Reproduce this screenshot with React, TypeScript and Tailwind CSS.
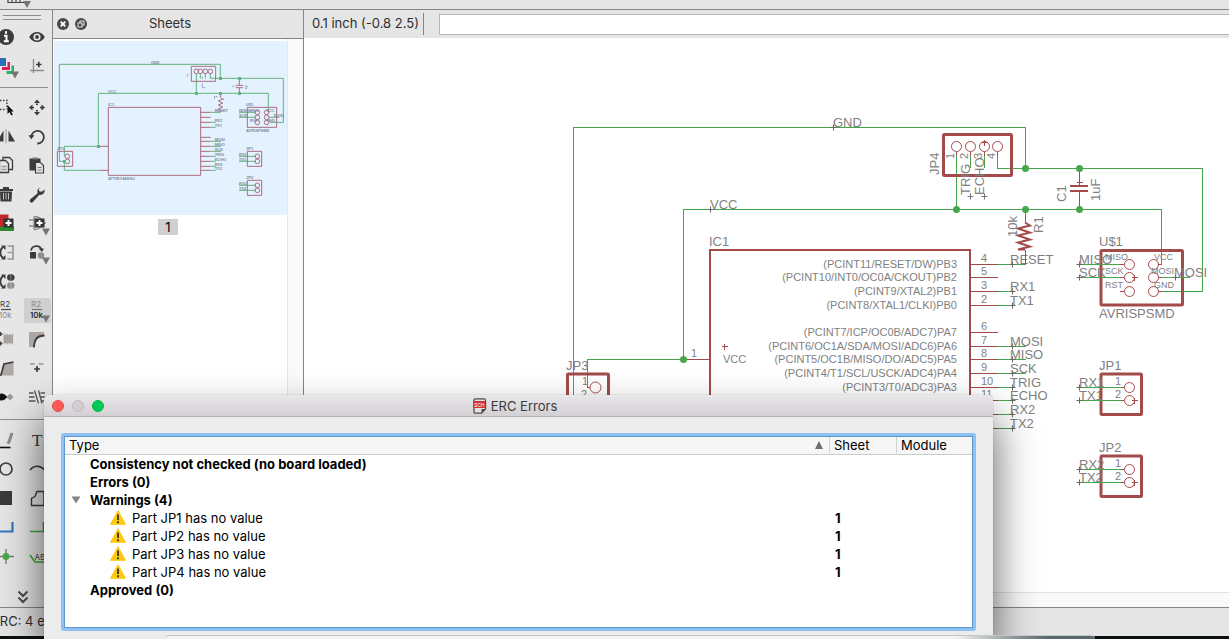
import type { ReactNode } from "react";

const GREEN = "#46a64b";
const RED = "#a34b4b";
const INK = "#3c3c3c";

/* ---------- tool palette ---------- */

type Tool = { name: string; art: ReactNode; more?: boolean; active?: boolean };

const plusBox = (x: number, y: number) => (
  <>
    <rect x={x} y={y} width="10" height="9" fill="#333" />
    <path d={`M${x + 5} ${y + 1.5}v6M${x + 2} ${y + 4.5}h6`} stroke="#fff" strokeWidth="2" />
  </>
);

const viewTools: Tool[] = [
  {
    name: "Info",
    art: (
      <>
        <circle cx="15" cy="14" r="8" fill={INK} />
        <path d="M15 8.2v2.6M13 12.7h2.5v5.2M12.8 18.3h5" stroke="#fff" strokeWidth="2" fill="none" />
      </>
    ),
  },
  {
    name: "Show",
    art: (
      <>
        <path d="M7.2 14C11 7.4 19 7.4 22.8 14 19 20.6 11 20.6 7.2 14Z" fill={INK} />
        <circle cx="15" cy="14" r="3.6" fill="#e6e6e6" />
        <circle cx="15" cy="14" r="1.9" fill={INK} />
      </>
    ),
  },
  {
    name: "Layer settings",
    more: true,
    art: (
      <>
        <path d="M20.500 13.500h2.500v8.500h-7.500v-3h5z" fill="#2fae62" />
        <path d="M16.500 10h2.500v8h-8v-3h5.500z" fill="#d81e58" />
        <rect x="7" y="6" width="8" height="8" fill="#2a70b8" />
      </>
    ),
  },
  {
    name: "Mark",
    art: (
      <>
        <path d="M8 18.500h14M11.500 7v14" stroke="#8a8a8a" strokeWidth="1.300" />
        <path d="M14 12.500h5.500M16.800 9.700v5.600" stroke={INK} strokeWidth="1.700" />
      </>
    ),
  },
];

const editTools: Tool[] = [
  {
    name: "Group",
    art: (
      <>
        <path d="M6 7.500h10v9M6 16.500h9" stroke={INK} strokeWidth="1.400" strokeDasharray="1.500 1.500" fill="none" />
        <path d="M16.500 12v9l2-2 1.700 3.500 1.600-.8-1.700-3.300h2.700z" fill="#111" />
      </>
    ),
  },
  {
    name: "Move",
    art: (
      <path d="M15 6.500l3 3.500h-6zM15 22.500l3-3.500h-6zM7 14.500l3.500-3v6zM23 14.500l-3.500-3v6zM14 10.500h2v1.500h-2zM14 17h2v1.500h-2zM10.500 13.700H12v1.600h-1.500zM18 13.700h1.500v1.600H18z" fill={INK} />
    ),
  },
  {
    name: "Mirror",
    art: (
      <>
        <path d="M12.500 8.500v11H6zM17.500 8.500v11H24z" fill={INK} />
        <path d="M15 7v14.500" stroke="#9a9a9a" strokeWidth="1" />
      </>
    ),
  },
  {
    name: "Rotate",
    art: (
      <>
        <path d="M9.300 14.500a6.300 6.300 0 1 1 6 7" stroke={INK} strokeWidth="1.800" fill="none" />
        <path d="M6.500 13.300h6l-3.300 4z" fill={INK} />
      </>
    ),
  },
  {
    name: "Copy",
    art: (
      <g fill="#e6e6e6" stroke={INK} strokeWidth="1.300">
        <path d="M12 6.500h6.500l3 3v9H12z" />
        <path d="M8.500 9.500h6l3 3v9h-9z" />
        <path d="M10.500 15.500h5M10.500 18.500h5" stroke="#999" />
      </g>
    ),
  },
  {
    name: "Paste",
    art: (
      <>
        <path d="M7.500 7.500h11v12h-11z" fill={INK} />
        <path d="M10.500 6.500h5v2h-5z" fill="#777" />
        <path d="M13.500 11.500h5l3 3v7.500h-8z" fill="#e6e6e6" stroke={INK} strokeWidth="1.200" />
        <path d="M15.500 16.500h4M15.500 19h4" stroke="#777" strokeWidth="1" />
      </>
    ),
  },
  {
    name: "Delete",
    art: (
      <>
        <path d="M8 9h14v2H8zM12 7h6v2h-6zM9 11.500h12l-.5 10H9.500z" fill={INK} />
        <path d="M12.500 13v6.500M15 13v6.500M17.500 13v6.500" stroke="#bdbdbd" strokeWidth="1" />
      </>
    ),
  },
  {
    name: "Change",
    art: (
      <path d="M18.800 7.200a4.600 4.600 0 0 0-3.200 6.100l-7.300 6a1.900 1.900 0 0 0 2.700 2.800l6.100-7.200a4.600 4.600 0 0 0 5.500-5.400l-2.900 2.300-2.500-.6-.5-2.300z" fill={INK} />
    ),
  },
  {
    name: "Add part",
    art: (
      <>
        <rect x="6" y="5.500" width="11.500" height="13" fill="#c1272d" />
        <rect x="6" y="17.500" width="17" height="4.500" fill="#2d8a2d" />
        {plusBox(12.5, 9.5)}
      </>
    ),
  },
  {
    name: "Add gate",
    more: true,
    art: (
      <>
        <path d="M12 7.500v13M12 7.500c5 0 8 2.500 9 6.500-1 4-4 6.500-9 6.500M7 11h5M7 17h5M21 14h3" stroke="#8a8a8a" strokeWidth="1.300" fill="none" />
        {plusBox(12.5, 9.5)}
      </>
    ),
  },
  {
    name: "Pin swap",
    art: (
      <>
        <path d="M12 9c-3.500 3-3.500 8 0 11" stroke={INK} strokeWidth="1.800" fill="none" />
        <path d="M10 7.500h4.500V12zM10 21.500h4.500V17z" fill={INK} />
        <path d="M22 7v15M16.500 8h5.500M16.500 14.500h5.500M16.500 21h5.500" stroke="#999" strokeWidth="1.700" />
      </>
    ),
  },
  {
    name: "Replace",
    more: true,
    art: (
      <>
        <path d="M9 12.500c1-5.500 9-6 10.500-.8" stroke={INK} strokeWidth="1.700" fill="none" />
        <path d="M16.500 10.500h5.500l-2 3.500z" fill={INK} />
        <rect x="8" y="14" width="6" height="6.500" fill={INK} />
        <circle cx="19" cy="17.500" r="3.300" fill="#8f8f8f" />
      </>
    ),
  },
  {
    name: "Gate swap",
    art: (
      <>
        <path d="M12 9c-3.500 3-3.500 8 0 11" stroke={INK} strokeWidth="1.800" fill="none" />
        <path d="M10 7.500h4.500V12zM10 21.500h4.500V17z" fill={INK} />
        <path d="M19.300 7.500a3 3 0 0 0 0 6zM20.300 7.500a3 3 0 0 1 0 6z" fill={INK} stroke={INK} strokeWidth=".7" />
        <path d="M19.300 15.500a3 3 0 0 0 0 6zM20.300 15.500a3 3 0 0 1 0 6z" fill="#8f8f8f" stroke="#8f8f8f" strokeWidth=".7" />
      </>
    ),
  },
  { name: "Spare slot", art: null },
  {
    name: "Name",
    art: (
      <g fontSize="8">
        <text x="9" y="11" fill="#444">R2</text>
        <path d="M10 13.500h10" stroke="#555" strokeWidth="1.300" />
        <text x="8" y="22" fill="#8c8c8c">10k</text>
      </g>
    ),
  },
  {
    name: "Value",
    more: true,
    active: true,
    art: (
      <g fontSize="8">
        <text x="9" y="11" fill="#8c8c8c">R2</text>
        <path d="M10 13.500h10" stroke="#777" strokeWidth="1.300" />
        <text x="8" y="22" fill="#111" fontWeight="500">10k</text>
      </g>
    ),
  },
  {
    name: "Smash",
    art: (
      <>
        <path d="M12.500 10h9.500v8h-9.500z" fill="#aaa3a0" />
        <path d="M14 8.800v10.400M16.500 8.800v10.400M19 8.800v10.400M21.500 8.800v10.400" stroke="#aaa3a0" strokeWidth="1.200" />
        <path d="M7.500 9h4M9.500 7v4M7.500 18.500h4M9.500 16.500v4" stroke={INK} strokeWidth="1.500" />
      </>
    ),
  },
  {
    name: "Miter",
    art: (
      <>
        <rect x="7" y="7" width="15" height="15" fill="#aea7a4" />
        <path d="M12 22c0-7 3-10.500 10-10.500V22z" fill="#e6e6e6" />
        <path d="M12 22.500c0-8 3-12 10.500-12" stroke={INK} strokeWidth="1.800" fill="none" />
      </>
    ),
  },
  {
    name: "Split",
    art: (
      <>
        <path d="M6 21.500h16.500V8L13 9.500l-3 11z" fill="#aea7a4" />
        <path d="M6 21h4l3-11 9.500-2" stroke={INK} strokeWidth="1.700" fill="none" />
      </>
    ),
  },
  {
    name: "Invoke",
    art: (
      <>
        <path d="M8 10h5M16.500 10h5" stroke="#999" strokeWidth="1.400" />
        <path d="M12 15h6M15 12v6" stroke={INK} strokeWidth="1.700" />
      </>
    ),
  },
  {
    name: "Optimize",
    art: (
      <>
        <circle cx="10.500" cy="14" r="3.500" fill="#111" />
        <path d="M13 11l3.500 3-3.500 3z" fill="#111" />
        <path d="M15.500 14l3.500-3.500 3.500 3.500-3.500 3.500z" fill="#999" />
      </>
    ),
  },
  {
    name: "Net split",
    art: (
      <path d="M7 10h4.500M7 14h5.500M7 18h6.500M12.500 7.500l4 13M18.500 10H23M18.500 14H23M18.500 18H23M16.500 7.500l3.500 13" stroke="#555" strokeWidth="1.300" />
    ),
  },
];

const drawTools: Tool[] = [
  {
    name: "Line",
    art: (
      <>
        <path d="M6 21.500h13.500" stroke="#111" strokeWidth="1.600" />
        <path d="M21 7l-3 9-1.500 1.500" stroke="#8d8d8d" strokeWidth="3" fill="none" />
      </>
    ),
  },
  {
    name: "Text",
    art: <text x="10" y="20" fontSize="17" fill="#333" className="font-['Liberation_Serif',serif]">T</text>,
  },
  { name: "Circle", art: <circle cx="15" cy="14" r="6" fill="none" stroke={INK} strokeWidth="1.700" /> },
  { name: "Arc", art: <path d="M8 15c4-5 10-5 15 0" fill="none" stroke={INK} strokeWidth="1.700" /> },
  { name: "Rectangle", art: <rect x="7" y="7" width="14" height="14" fill="#3a3a3a" /> },
  { name: "Polygon", art: <path d="M9.500 21.500v-7l3.500-2 2-5h7v14z" fill="none" stroke={INK} strokeWidth="1.400" /> },
  { name: "Bus", art: <path d="M6 18.500h15.500V9" fill="none" stroke="#2f77bf" strokeWidth="2.200" /> },
  { name: "Net", art: <path d="M8 18.500h13.500V9" fill="none" stroke="#3fa63f" strokeWidth="1.600" /> },
  {
    name: "Junction",
    art: (
      <>
        <path d="M8 14.500h15M15 7v15" stroke="#777" strokeWidth="1.300" />
        <circle cx="15" cy="14.500" r="3.400" fill="#44ac44" />
      </>
    ),
  },
  {
    name: "Label",
    art: (
      <>
        <path d="M8 13l5 7h12" fill="none" stroke="#3fa63f" strokeWidth="1.600" />
        <text x="12.500" y="18" fontSize="8" fill="#444">ABC</text>
      </>
    ),
  },
];

function ToolGrid({ tools }: { tools: Tool[] }) {
  return (
    <div className="-ml-[9px] grid w-[62px] grid-cols-2">
      {tools.map((t) =>
        t.art === null ? (
          <span key={t.name} className="h-[29px]" />
        ) : (
          <button
            key={t.name}
            type="button"
            aria-label={t.name}
            className={`h-[29px] ${t.active ? "rounded bg-[#cfcfcf] bg-clip-content p-0.5" : ""}`}
          >
            <svg viewBox="0 0 31 29" className={t.active ? "-m-0.5 h-[29px] w-[31px]" : "h-[29px] w-[31px]"} aria-hidden="true">
              {t.art}
              {t.more && <path d="M20 19.500h8l-4 7z" fill="#757575" />}
            </svg>
          </button>
        ),
      )}
    </div>
  );
}

/* ---------- schematic ---------- */

function Net({ d }: { d: string }) {
  return <path d={d} fill="none" stroke={GREEN} strokeWidth="1" shapeRendering="crispEdges" />;
}
function Part({ d, w = 1 }: { d: string; w?: number }) {
  return <path d={d} fill="none" stroke={RED} strokeWidth={w} shapeRendering="crispEdges" />;
}
function Box({ x, y, w, h }: { x: number; y: number; w: number; h: number }) {
  return <rect x={x} y={y} width={w} height={h} rx="1" fill="none" stroke={RED} strokeWidth="3" />;
}
function Label({ x, y, children, size = 13, up, end }: { x: number; y: number; children: string; size?: number; up?: boolean; end?: boolean }) {
  return (
    <text x={x} y={y} fontSize={size} textAnchor={end ? "end" : "start"} transform={up ? `rotate(-90 ${x} ${y})` : undefined}>
      {children}
    </text>
  );
}
const cross = (x: number, y: number, r = 3) => `M${x - r} ${y}h${2 * r}M${x} ${y - r}v${2 * r}`;

const pins: { y: number; n: string; fn: string; net?: string; to?: number }[] = [
  { y: 264, n: "4", fn: "(PCINT11/RESET/DW)PB3", net: "RESET", to: 1026 },
  { y: 277, n: "5", fn: "(PCINT10/INT0/OC0A/CKOUT)PB2" },
  { y: 291, n: "3", fn: "(PCINT9/XTAL2)PB1", net: "RX1", to: 1013 },
  { y: 305, n: "2", fn: "(PCINT8/XTAL1/CLKI)PB0", net: "TX1", to: 1013 },
  { y: 332, n: "6", fn: "(PCINT7/ICP/OC0B/ADC7)PA7" },
  { y: 346, n: "7", fn: "(PCINT6/OC1A/SDA/MOSI/ADC6)PA6", net: "MOSI", to: 1026 },
  { y: 359, n: "8", fn: "(PCINT5/OC1B/MISO/DO/ADC5)PA5", net: "MISO", to: 1026 },
  { y: 373, n: "9", fn: "(PCINT4/T1/SCL/USCK/ADC4)PA4", net: "SCK", to: 1026 },
  { y: 387, n: "10", fn: "(PCINT3/T0/ADC3)PA3", net: "TRIG", to: 1013 },
  { y: 400, n: "11", fn: "", net: "ECHO", to: 1013 },
  { y: 414, n: "", fn: "", net: "RX2", to: 1013 },
  { y: 428, n: "", fn: "", net: "TX2", to: 1013 },
];

function TwoPinHeader({ name, y, nets }: { name: string; y: number; nets: [string, string] }) {
  return (
    <g>
      <Box x={1101} y={y} w={40.5} h={40.5} />
      <Net d={`M1079 ${y + 13.5}H1121M1079 ${y + 26.5}H1121`} />
      <Part d={`M1121 ${y + 13.5}h3M1121 ${y + 26.5}h3${cross(1134.5, y + 26.5)}`} />
      <circle cx="1129.5" cy={y + 13.5} r="5" fill="none" stroke={RED} />
      <circle cx="1129.5" cy={y + 26.5} r="5" fill="none" stroke={RED} />
      <path d={cross(1079.5, y + 13.5) + cross(1079.5, y + 26.5)} stroke="#666" />
      <Label x={1099} y={y - 4}>{name}</Label>
      <Label x={1079} y={y + 13}>{nets[0]}</Label>
      <Label x={1079} y={y + 26}>{nets[1]}</Label>
      <Label x={1115} y={y + 11} size={11}>1</Label>
      <Label x={1115} y={y + 24} size={11}>2</Label>
    </g>
  );
}

function Schematic() {
  return (
    <svg
      viewBox="304 38 925 554"
      className="h-[554px] w-[925px] max-w-none font-['Liberation_Sans',sans-serif]"
      fill="#7f7f7f"
      role="img"
      aria-label="Schematic"
    >
      <Net d="M573.5 400V127.5H1025.5V168.5M683.5 359.500V209.500H1161.500V264.500H1158M587.500 387V359.500H683M997.500 156V168.500H1202.500V291.500H1161M956.500 156V209M970.500 156V168M984.500 156V168M1025.500 264V252" />
      <Part d="M710 400V250H970V400" w={2} />
      <Part d={`M684 359.500H710M587 387.500h3${cross(724.5, 346.5)}`} />
      <Box x={567.5} y={374} w={41} h={40} />
      <circle cx="595.500" cy="387.500" r="5.500" fill="none" stroke={RED} />
      <Label x={566} y={370}>JP3</Label>
      <Label x={582} y={385} size={11}>1</Label>
      <Label x={581} y={398} size={11}>2</Label>
      <path d={cross(833.5, 127.5) + cross(710.5, 209.5)} stroke="#666" />
      <Label x={833} y={127}>GND</Label>
      <Label x={710} y={209}>VCC</Label>
      <Label x={709} y={246}>IC1</Label>
      <Label x={691} y={357} size={11}>1</Label>
      <Label x={723} y={363} size={11}>VCC</Label>

      {pins.map((p) => (
        <g key={p.y}>
          {p.to && <Net d={`M998 ${p.y + 0.5}H${p.to}`} />}
          <Part d={`M970 ${p.y + 0.5}H998`} />
          {p.net && <path d={cross(1012.5, p.y + 0.5)} stroke="#666" />}
          <Label x={981} y={p.y - 2} size={11}>{p.n}</Label>
          <Label x={957} y={p.y + 4} size={11} end>{p.fn}</Label>
          {p.net && <Label x={1010} y={p.y}>{p.net}</Label>}
        </g>
      ))}

      {/* JP4 */}
      <Box x={943.5} y={134.5} w={68} h={41} />
      {[956.5, 970.5, 984.5, 997.5].map((x, i) => (
        <g key={x}>
          <circle cx={x} cy="146.500" r="5" fill="none" stroke={RED} />
          <Part d={`M${x} 151.500V156`} />
          <Label x={x - 2.5} y={159} size={11} up>{String(i + 1)}</Label>
        </g>
      ))}
      <Part d={cross(984.5, 142.5)} />
      <path d={cross(970.5, 196.5) + cross(984.5, 196.5)} stroke="#777" />
      <Label x={939} y={175} up>JP4</Label>
      <Label x={970} y={195} up>TRIG</Label>
      <Label x={984} y={195} up>ECHO</Label>

      {/* C1 */}
      <Part d="M1079.500 168V186M1079.500 191V209M1077 182.500h6" />
      <Part d="M1070 186h18M1070 191h18" w={2} />
      <Label x={1066} y={202} up>C1</Label>
      <Label x={1100} y={201} up>1uF</Label>

      {/* R1 */}
      <Part d="M1025.500 209V222M1025.500 250V264" />
      <path d="M1025 222.500l5 3-12 3 12 4-12 3 12 4-12 3 12 4-12 3h7" fill="none" stroke={RED} strokeWidth="2" />
      <Label x={1017} y={237} up>10k</Label>
      <Label x={1043} y={233} up>R1</Label>

      {[[683.5, 359.5], [956.5, 209.5], [1025.5, 209.5], [1079.5, 209.5], [1025.5, 168.5], [1079.5, 168.5]].map(([x, y]) => (
        <circle key={`${x}-${y}`} cx={x} cy={y} r="3.500" fill={GREEN} />
      ))}

      {/* U$1 */}
      <Box x={1101} y={250.5} w={81.5} h={54.5} />
      <Net d="M1079 264.500H1121M1079 277.500H1121M1162 277.500H1190" />
      <Part d={`M1120 264.500h4M1120 277.500h4M1120 291.500h4M1158 264.500h3M1158 277.500h4M1158 291.500h4${cross(1134.5, 277.5)}`} />
      {[264.5, 277.5, 291.5].map((y) => (
        <g key={y} fill="none" stroke={RED}>
          <circle cx="1129.500" cy={y} r="5" />
          <circle cx="1153.500" cy={y} r="5" />
        </g>
      ))}
      <path d={cross(1079.5, 264.5) + cross(1079.5, 277.5) + cross(1175.5, 277.5)} stroke="#666" />
      <Label x={1099} y={246}>U$1</Label>
      <Label x={1099} y={318}>AVRISPSMD</Label>
      <Label x={1079} y={264}>MISO</Label>
      <Label x={1079} y={277}>SCK</Label>
      <Label x={1174} y={277}>MOSI</Label>
      <Label x={1105} y={260} size={9}>MISO</Label>
      <Label x={1105} y={274} size={9}>SCK</Label>
      <Label x={1105} y={288} size={9}>RST</Label>
      <Label x={1154} y={260} size={9}>VCC</Label>
      <Label x={1151} y={274} size={9}>MOSI</Label>
      <Label x={1154} y={288} size={9}>GND</Label>

      <TwoPinHeader name="JP1" y={374} nets={["RX1", "TX1"]} />
      <TwoPinHeader name="JP2" y={456} nets={["RX2", "TX2"]} />
    </svg>
  );
}

/* Sheet preview, drawn at three units to the pixel. */
const previewLabels: [number, number, string][] = [
  [302, 72, "GND"], [174, 159, "VCC"], [174, 197, "IC1"], [20, 329, "JP3"], [174, 419, "ATTINY44SSU"],
  [588, 197, "U$1"], [588, 275, "AVRISPSMD"], [588, 329, "JP1"], [588, 416, "JP2"],
  [494, 216, "RESET"], [494, 246, "RX1"], [494, 261, "TX1"], [494, 303, "MOSI"], [494, 318, "MISO"],
  [494, 333, "SCK"], [494, 348, "TRIG"], [494, 363, "ECHO"], [494, 378, "RX2"], [494, 390, "TX2"],
  [567, 216, "MISO"], [567, 231, "SCK"], [671, 231, "MOSI"], [596, 215, "MISO"], [600, 246, "RST"], [648, 215, "VCC"], [648, 246, "GND"],
  [567, 348, "RX1"], [567, 363, "TX1"], [567, 435, "RX2"], [567, 450, "TX2"],
];

function SheetPreview() {
  return (
    <svg viewBox="12 3 699 522" className="h-[174px] w-[233px] bg-[#e4f1fe]" fill="none" strokeWidth="3" aria-hidden="true">
      <path
        stroke="#63b27d"
        d="M43 364H28V73H511V115M145 319V160H655V217M481 100V115H700V247H660M439 100V160M451 100v16M466 100v16M43 349V319H145M43 364V391H145M482 217h29M482 247h15M482 262h15M482 304h31M482 319h31M482 334h31M482 349h15M482 364h15M482 379h15M482 391h15M567 217h50M567 232h50M656 232h32M567 349h50M567 364h50M567 436h50M567 451h50"
      />
      <path
        stroke="#ab6c7c"
        d="M175 202H452V406H175ZM22 334H68V379H22ZM424 79H497V124H424ZM592 202H680V262H592ZM592 334H635V379H592ZM592 421H635V466H592ZM145 319h30M145 391h30M452 217h30M452 232h30M452 247h30M452 262h30M452 292h30M452 304h30M452 319h30M452 334h30M452 349h30M452 364h30M452 379h30M452 391h30M568 115v21M557 136h22M557 143h22M568 143v17M511 160v12l7 5-13 6 13 6-13 6 13 6-13 6 6 3v7"
      />
      <path stroke="#8393a5" strokeDasharray="4 2" d="M412 103v8M457 110v8M457 131v12h9M547 139h7M583 138h8v7h-6M492 170h10M492 174h4M521 176v6" />
      <g stroke="#ab6c7c">
        {[439, 451, 466, 481].map((x) => <circle key={x} cx={x} cy="94" r="7" />)}
        {[349, 364].map((y) => <circle key={y} cx="52" cy={y} r="7" />)}
        {[217, 232, 247, 349, 364, 436, 451].map((y) => <circle key={y} cx="622" cy={y} r="7" />)}
        {[217, 232, 247].map((y) => <circle key={y} cx="650" cy={y} r="7" />)}
      </g>
      <path fill="#63b27d" d="M507 111h9v9h-9zM564 111h9v9h-9zM435 156h9v9h-9zM507 156h9v9h-9zM564 156h9v9h-9zM141 315h9v9h-9zM39 360h9v9h-9z" />
      <g fill="#7b8b9d" fontSize="12" fontWeight="700" className="font-['Liberation_Sans',sans-serif]">
        {previewLabels.map(([x, y, t]) => <text key={`${x}-${y}`} x={x} y={y}>{t}</text>)}
      </g>
    </svg>
  );
}

/* ---------- ERC dialog ---------- */

function WarningIcon() {
  return (
    <svg viewBox="0 0 16 15" className="h-[15px] w-4 shrink-0" aria-hidden="true">
      <path d="M8 .8L15.500 14.300H.5Z" fill="#fdc910" stroke="#fdc910" strokeWidth="1" strokeLinejoin="round" />
      <path d="M8 4.500v5.500M8 11.300v1.900" stroke="#403c20" strokeWidth="1.900" />
    </svg>
  );
}

const heading = "pl-[25px] font-bold";
const warnings = ["JP1", "JP2", "JP3", "JP4"];

function ErcDialog() {
  return (
    <section
      aria-label="ERC Errors"
      className="absolute top-[395px] right-[236px] bottom-0 left-[44px] flex flex-col rounded-t-[5px] bg-[#ececec] shadow-[0_24px_44px_rgba(0,0,0,0.65),0_0_1px_rgba(0,0,0,0.5)]"
    >
      <header className="flex h-[22px] shrink-0 items-center rounded-t-[5px] border-b border-[#b4b2b4] bg-linear-to-b from-[#e9e7e9] to-[#d3d0d3] pr-4 pl-2">
        <div className="flex flex-1 gap-2">
          <button type="button" aria-label="Close" className="size-3 rounded-full border border-[#e24b48] bg-[#fc5b57]" />
          <button type="button" aria-label="Minimize" className="size-3 rounded-full border border-[#bdbbbd] bg-[#d0ced0]" />
          <button type="button" aria-label="Zoom" className="size-3 rounded-full border border-[#0cb44a] bg-[#05c955]" />
        </div>
        <h2 className="flex items-center gap-1 text-[13px] leading-4 text-[#3b3a3b]">
          <svg viewBox="0 0 15 16" className="h-4 w-[15px]" aria-hidden="true">
            <path d="M3.500.8h8.500q1.500 0 1.500 1.500v8.700l-4 4.200h-6Q2 15.200 2 13.700V2.300Q2 .8 3.500.8Z" fill="#e4e2e4" stroke="#504a4c" strokeWidth="1.300" />
            <path d="M13.500 11h-4v4z" fill="#504a4c" />
            <rect x="1" y="3" width="12" height="7" fill="#cf3438" />
            <text x="2" y="9" fontSize="5" fill="#fff">SCH</text>
          </svg>
          ERC Errors
        </h2>
        <div className="flex-1" />
      </header>
      <div className="mx-[17px] mt-4 mb-2 flex-1 rounded-[3px] bg-[#8fc1f0] p-[3px]">
        <div className="h-full border border-[#5e97cc] bg-white">
          <table className="w-full table-fixed border-collapse text-left text-[13px] leading-[18px] text-black">
            <thead>
              <tr className="h-[17px] border-b border-[#cbcbcb] bg-[#f6f6f6] leading-4">
                <th className="pl-1 font-normal">
                  <span className="flex items-center justify-between pr-1.5">
                    Type
                    <svg viewBox="0 0 8 8" className="size-2" aria-hidden="true"><path d="M4 0l4 8H0z" fill="#6f6f6f" /></svg>
                  </span>
                </th>
                <th className="w-[67px] font-normal"><span className="block border-l border-[#d2d2d2] pl-1">Sheet</span></th>
                <th className="w-[76px] font-normal"><span className="block border-l border-[#d2d2d2] pl-1">Module</span></th>
              </tr>
            </thead>
            <tbody>
              <tr><td className={heading}>Consistency not checked (no board loaded)</td><td /><td /></tr>
              <tr><td className={heading}>Errors (0)</td><td /><td /></tr>
              <tr>
                <td className="font-bold">
                  <button type="button" aria-expanded="true" className="flex items-center gap-[9px] pl-1.5">
                    <svg viewBox="0 0 10 8" className="h-2 w-2.5" aria-hidden="true"><path d="M.5.5h9L5 7.500z" fill="#868686" /></svg>
                    Warnings (4)
                  </button>
                </td>
                <td /><td />
              </tr>
              {warnings.map((part) => (
                <tr key={part}>
                  <td><span className="flex h-[18px] items-center gap-1.5 pl-[45px]"><WarningIcon />Part {part} has no value</span></td>
                  <td className="pl-1.5 font-bold">1</td>
                  <td />
                </tr>
              ))}
              <tr><td className={heading}>Approved (0)</td><td /><td /></tr>
            </tbody>
          </table>
        </div>
      </div>
    </section>
  );
}

/* ---------- window ---------- */

export default function App() {
  return (
    <div className="relative flex h-screen flex-col overflow-hidden bg-[#0a1012] font-[Inter,sans-serif] text-[13px] text-[#2f2f2f]">
      <div className="h-[10px] shrink-0 border-b border-[#868686] bg-[#e5e5e5]">
        <svg viewBox="0 0 40 9" className="h-[9px] w-10" aria-hidden="true">
          <path d="M8 0v2.500h16M12 0v2.500M16 0v2.500M20 0v2.500" stroke="#444" strokeWidth="1.200" fill="none" />
          <path d="M23 1h8l-4 7z" fill="#757575" />
        </svg>
      </div>

      <div className="flex min-h-0 flex-1">
        <nav aria-label="Tools" className="flex w-[53px] shrink-0 flex-col overflow-hidden border-r border-[#868686] bg-[#e6e6e6]">
          <div className="mt-[5px] mb-[3px] ml-[3px] h-[5px] w-[38px] shrink-0 border-y border-[#8e8e8e]" />
          <ToolGrid tools={viewTools} />
          <hr className="mt-1.5 mr-1 mb-[5px] border-[#8e8e8e]" />
          <ToolGrid tools={editTools} />
          <hr className="mt-[7px] mb-1.5 border-[#8e8e8e]" />
          <ToolGrid tools={drawTools} />
          <button type="button" aria-label="More tools" className="mt-auto mb-[3px] ml-[17px] w-3">
            <svg viewBox="0 0 12 14" className="h-3.5 w-3" aria-hidden="true">
              <path d="M1.500 1.500L6 6l4.500-4.500M1.500 7.500L6 12l4.500-4.500" stroke="#4a4a4a" strokeWidth="2" fill="none" />
            </svg>
          </button>
        </nav>

        <aside className="flex w-[251px] shrink-0 flex-col border-r border-[#868686] bg-white">
          <header className="flex h-[29px] shrink-0 items-center border-b border-[#868686] bg-[#e5e5e5] pl-1">
            <div className="flex w-[38px] gap-1.5">
              <button type="button" aria-label="Close panel">
                <svg viewBox="0 0 12 12" className="size-3" aria-hidden="true">
                  <circle cx="6" cy="6" r="6" fill="#484848" />
                  <path d="M3.700 3.700l4.600 4.600M8.300 3.700L3.700 8.300" stroke="#fff" strokeWidth="1.900" />
                </svg>
              </button>
              <button type="button" aria-label="Float panel">
                <svg viewBox="0 0 12 12" className="size-3" aria-hidden="true">
                  <circle cx="6" cy="6" r="6" fill="#484848" />
                  <path d="M5 5V3h4v4H7M3 5h4v4H3z" stroke="#ddd" strokeWidth="1.100" fill="none" />
                </svg>
              </button>
            </div>
            <h1 className="flex-1 pr-[58px] text-center">Sheets</h1>
          </header>
          <div className="flex flex-1">
            <div className="flex flex-1 flex-col items-center pt-0.5">
              <SheetPreview />
              <span className="mt-1 mr-1 h-4 w-5 bg-[#d0d0d0] text-center leading-4 text-black">1</span>
            </div>
            <div className="w-4 border-l border-[#e6e6ea] bg-[#fafafa]" />
          </div>
        </aside>

        <main className="flex min-w-0 flex-1 flex-col bg-white">
          <div className="flex h-7 shrink-0 items-center bg-[#e5e5e5] pl-2">
            <output className="w-[111px] whitespace-nowrap">0.1 inch (-0.8 2.5)</output>
            <span className="mr-[15px] h-[22px] w-px bg-[#868686]" />
            <input aria-label="Command" className="h-[21px] min-w-0 flex-1 border border-r-0 border-[#b5b5b5] bg-white px-1 outline-none" />
          </div>
          <div className="min-h-0 flex-1 overflow-hidden">
            <Schematic />
          </div>
          <div className="h-[15px] shrink-0 border-t border-[#e2e2e2] bg-[#fafafa]" />
        </main>
      </div>

      <footer className="mb-[3px] h-[29px] shrink-0 overflow-hidden border-t border-[#868686] bg-[#e5e5e5]">
        <p className="-ml-2 leading-[27px] whitespace-nowrap">ERC: 4 errors/warnings</p>
      </footer>

      <ErcDialog />
      <div className="absolute right-[134px] bottom-0 left-[165px] h-1 rounded-t border-t border-[#c6c6c6] bg-linear-to-r from-[#f3f3f3] from-85% to-[#56686a] to-95%" />
    </div>
  );
}
